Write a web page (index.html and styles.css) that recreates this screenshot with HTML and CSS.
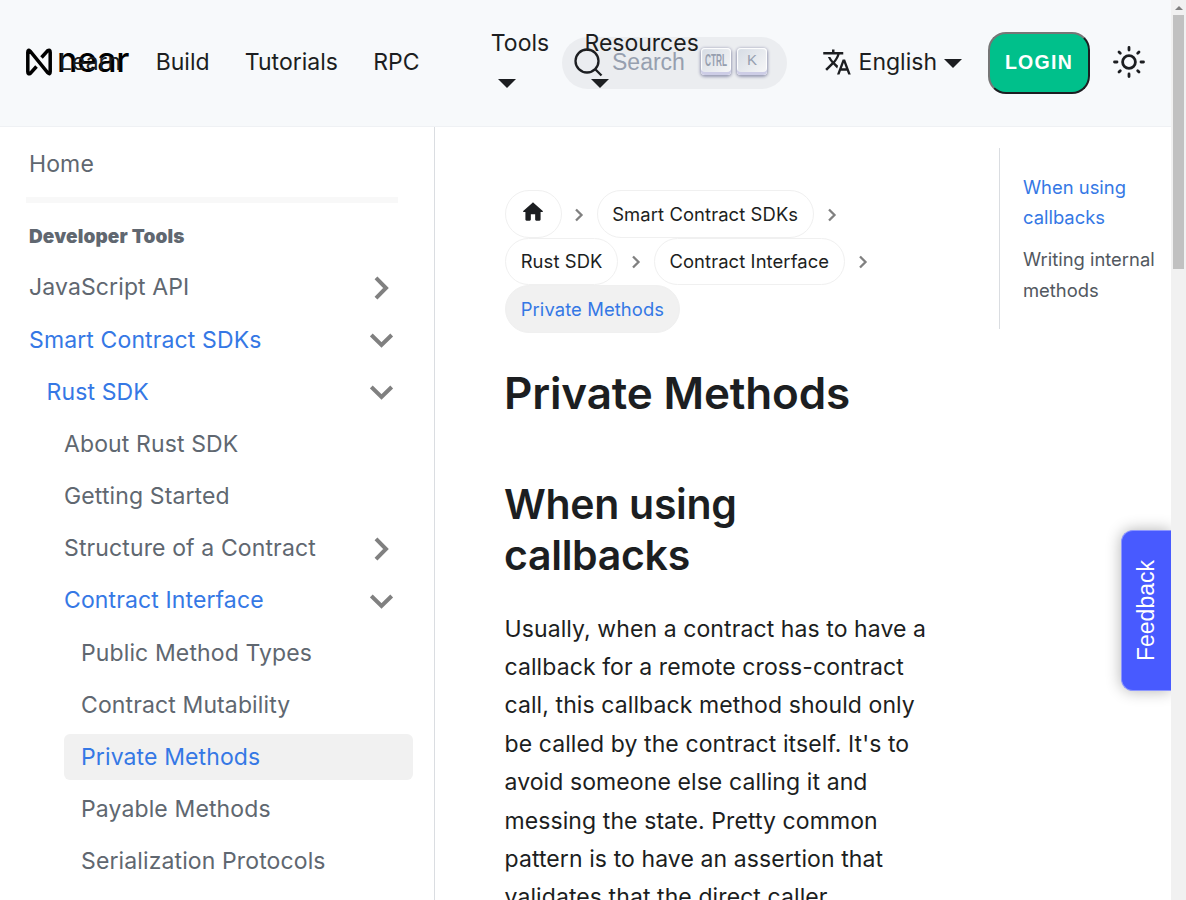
FILE: index.html
```html
<!DOCTYPE html>
<html lang="en">
<head>
<meta charset="utf-8">
<title>Private Methods</title>
<link rel="stylesheet" href="styles.css">
</head>
<body>
<div class="page">
  <header class="navbar">
    <a class="brand">
      <svg class="brand-mark" width="26" height="28" viewBox="0 0 26 28"><path d="M10.500 18.500L4.500 25.200Q1.800 27 1.800 23.800V4.200Q1.800 1 4.200 3.200L21.800 24.800Q24.200 27 24.200 23.800V4.200Q24.200 1 21.500 2.800L15.500 9.500" fill="none" stroke="#000" stroke-width="3.500"/></svg>
      <span class="brand-name">near</span>
    </a>
    <nav class="links">
      <a class="link">Learn</a>
      <a class="link">Build</a>
      <a class="link">Tutorials</a>
      <a class="link">RPC</a>
      <span class="divider"></span>
      <a class="drop">Tools<i class="caret"></i></a>
      <a class="drop">Resources<i class="caret"></i></a>
    </nav>
    <div class="search">
      <svg width="30" height="30" viewBox="0 0 30 30" fill="none" stroke="#1c1e21" stroke-width="2.300"><circle cx="13" cy="13" r="11.500"/><path d="M21 21L27.500 27.500"/></svg>
      <span class="search-label">Search</span>
      <span class="key"><svg class="key-art" width="28" height="23" viewBox="0 0 28 23"><text x="3" y="18" textLength="22" lengthAdjust="spacingAndGlyphs" class="key-ctrl">CTRL</text></svg></span>
      <span class="key key-k">K</span>
    </div>
    <div class="actions">
      <a class="lang">
        <svg width="30" height="30" viewBox="0 0 24 24" fill="#1c1e21"><path d="M12.870 15.070l-2.540-2.510.030-.030c1.740-1.940 2.980-4.170 3.710-6.530H17V4h-7V2H8v2H1v1.990h11.170C11.500 7.920 10.440 9.750 9 11.350 8.070 10.320 7.300 9.190 6.690 8h-2c.730 1.630 1.730 3.170 2.980 4.560l-5.090 5.020L4 19l5-5 3.110 3.110.760-2.040zM18.500 10h-2L12 22h2l1.120-3h4.750L21 22h2l-4.500-12zm-2.620 7l1.620-4.330L19.120 17h-3.240z"/></svg>
        <span>English</span><i class="caret"></i>
      </a>
      <button class="login">LOGIN</button>
      <svg class="sun" width="34" height="34" viewBox="-17 -17 34 34" fill="none" stroke="#1c1e21" stroke-width="2.800" stroke-linecap="round"><circle r="6.400"/><path d="M0-14.500V-12M0 12V14.500M-14.500 0H-12M12 0H14.500M-10-10L-8.700-8.700M8.700 8.700L10 10M-10 10L-8.700 8.700M8.700-8.700L10-10"/></svg>
    </div>
  </header>
  <div class="body">
    <aside class="sidebar">
      <a class="item">Home</a>
      <div class="rule"></div>
      <div class="heading">Developer Tools</div>
      <a class="item">JavaScript API<svg class="chev" viewBox="0 0 24 24"><path d="M6 1.800L16 12L6 22.200"/></svg></a>
      <a class="item on">Smart Contract SDKs<svg class="chev" viewBox="0 0 24 24"><path d="M1.300 7L11.500 17L21.700 7"/></svg></a>
      <a class="item on l2">Rust SDK<svg class="chev" viewBox="0 0 24 24"><path d="M1.300 7L11.500 17L21.700 7"/></svg></a>
      <a class="item l3">About Rust SDK</a>
      <a class="item l3">Getting Started</a>
      <a class="item l3">Structure of a Contract<svg class="chev" viewBox="0 0 24 24"><path d="M6 1.800L16 12L6 22.200"/></svg></a>
      <a class="item on l3">Contract Interface<svg class="chev" viewBox="0 0 24 24"><path d="M1.300 7L11.500 17L21.700 7"/></svg></a>
      <a class="item l4">Public Method Types</a>
      <a class="item l4">Contract Mutability</a>
      <a class="item on l4 active">Private Methods</a>
      <a class="item l4">Payable Methods</a>
      <a class="item l4">Serialization Protocols</a>
    </aside>
    <main class="doc">
      <div class="crumbs">
        <span class="pill home"><svg width="26" height="26" viewBox="0 0 24 24"><path d="M10 19v-5h4v5c0 .55.45 1 1 1h3c.55 0 1-.45 1-1v-7h1.700c.46 0 .68-.57.33-.87L12.670 3.600c-.38-.34-.96-.34-1.340 0l-8.360 7.530c-.34.3-.13.87.33.87H5v7c0 .55.45 1 1 1h3c.55 0 1-.45 1-1z" fill="#1c1e21"/></svg></span><svg class="sep" viewBox="0 0 10 14"><path d="M2 1.500L7.500 7L2 12.500"/></svg>
        <span class="pill">Smart Contract SDKs</span><svg class="sep" viewBox="0 0 10 14"><path d="M2 1.500L7.500 7L2 12.500"/></svg>
        <span class="pill">Rust SDK</span><svg class="sep" viewBox="0 0 10 14"><path d="M2 1.500L7.500 7L2 12.500"/></svg>
        <span class="pill">Contract Interface</span><svg class="sep" viewBox="0 0 10 14"><path d="M2 1.500L7.500 7L2 12.500"/></svg>
        <span class="pill current">Private Methods</span>
      </div>
      <h1>Private Methods</h1>
      <h2>When using<br>callbacks</h2>
      <p>Usually, when a contract has to have a<br>callback for a remote cross-contract<br>call, this callback method should only<br>be called by the contract itself. It's to<br>avoid someone else calling it and<br>messing the state. Pretty common<br>pattern is to have an assertion that<br>validates that the direct caller</p>
    </main>
    <aside class="toc">
      <a class="on">When using callbacks</a>
      <a>Writing internal methods</a>
    </aside>
  </div>
  <div class="feedback"><span>Feedback</span></div>
</div>
<div class="scrollbar"><i class="up"></i><div class="thumb"></div></div>
</body>
</html>
```
FILE: styles.css
```css
* { box-sizing: border-box; }
html, body { margin: 0; height: 100%; }
body {
  display: flex;
  height: 900px;
  overflow: hidden;
  background: #fff;
  color: #1c1e21;
  font: 23px/38.350px Inter, "Liberation Sans", sans-serif;
}
.page { position: relative; width: 1171px; height: 900px; overflow: hidden; }
.navbar {
  display: flex;
  height: 127px;
  padding: 0 25px 0 26px;
  background: #f7f9fb;
  border-bottom: 1px solid #eff1f4;
  white-space: nowrap;
}
.brand { position: relative; z-index: 1; display: flex; width: 33px; height: 124px; align-items: center; gap: 5px; color: #000; }
.brand-mark { flex: none; }
.brand-name { font-size: 34px; font-weight: 500; letter-spacing: -.300px; line-height: 34px; margin-top: -5px; }
.links { position: relative; z-index: 1; display: flex; width: 503px; height: 124px; align-items: center; }
.link { margin-right: 35.300px; }
.link:first-child { margin-right: 34.500px; }
.divider { width: 2px; height: 30px; background: #97999c; margin-right: 36px; }
.drop { display: flex; flex-direction: column; height: 124px; padding-top: 24px; margin-right: 35.300px; }
.caret { width: 0; height: 0; border: 9px solid transparent; border-top-color: #1c1e21; border-bottom: 0; }
.drop .caret { margin: 17px 0 0 7px; }
.search { display: flex; flex: none; align-items: center; width: 225px; height: 52px; margin-top: 37px; padding-left: 12px; border-radius: 26px; background: #ebedf0; }
.search-label { width: 97px; padding-left: 8px; margin-top: -2px; font-family: "Liberation Sans", sans-serif; color: #969faf; }
.key { display: flex; flex: none; width: 30px; height: 27px; margin: -4px 6px 0 0; padding: 0 1px; border-radius: 4px; background: linear-gradient(-225deg, #d5dbe4, #f8f8f8); box-shadow: inset 0 -3px #cdcde6, inset 0 0 1px 1px #fff, 0 1px 3px 1px rgba(30, 35, 90, .4); }
.key-art { overflow: visible; }
.key-ctrl { font: bold 16.500px/1 "Liberation Sans", sans-serif; fill: #969faf; }
.key-k { justify-content: center; font: 15px/24px "Liberation Sans", sans-serif; color: #969faf; }
.actions { display: flex; height: 124px; align-items: center; margin-left: auto; }
.lang { display: flex; align-items: center; }
.lang span { margin: 0 8px 0 7px; }
.lang .caret { margin: 2px 1px 0 -1px; }
.login { width: 102px; height: 62px; margin: 2px 22px 0 25px; padding: 0 0 1px; border: 2px solid #1c1e21; border-top-color: #767676; border-left-color: #767676; border-radius: 18px; background: #00c08b; color: #fff; font: bold 19.500px "Liberation Sans", sans-serif; letter-spacing: 1.300px; }
.body { display: flex; height: 773px; }
.sidebar { flex: none; width: 435px; padding: 14px 21px 0 12px; border-right: 1px solid #dadde1; letter-spacing: .120px; }
.item { display: flex; align-items: center; justify-content: space-between; height: 46.200px; margin-bottom: 5.970px; padding: 0 19px 0 17px; border-radius: 6px; color: #606770; }
.l2 { margin-left: 17.500px; }
.l3 { margin-left: 35px; }
.l4 { margin-left: 52px; }
.on { color: #3578e5; }
.active { background: #f1f1f1; }
.rule { width: 372px; height: 6px; margin: 10px 0 14px 14px; background: #f8f8f8; }
.heading { height: 38px; margin: 15px 0 8.300px 17px; font-size: 19px; font-weight: 900; color: #606770; letter-spacing: .130px; }
.chev { width: 24px; height: 24px; margin-top: 1px; fill: none; stroke: #808080; stroke-width: 4; }
.doc { width: 564px; padding: 63px 70px 0; white-space: nowrap; letter-spacing: .090px; }
.crumbs { display: flex; flex-wrap: wrap; align-items: center; width: 400px; font-size: 18.400px; letter-spacing: .100px; }
.pill { display: flex; align-items: center; height: 47.500px; padding: 0 14.700px; border: 1px solid #f0f0f0; border-radius: 24px; }
.home { width: 57px; padding: 0 14px; }
.home svg { margin-top: -4px; }
.sep { width: 10px; height: 14px; margin: 2px 12.500px 0 13px; fill: none; stroke: #808080; stroke-width: 2.300; }
.home + .sep { margin-left: 12px; }
.current { background: #f1f1f1; color: #3578e5; }
h1, h2, p { margin: 0; }
h1 { margin: 33px 0 0 -1px; font-size: 44px; font-weight: 600; line-height: 55px; letter-spacing: -.150px; }
h2 { margin: 58px 0 0 -1px; font-size: 41px; font-weight: 600; line-height: 51px; letter-spacing: -.300px; }
p { margin: 29.300px 0 0 -.500px; }
.toc { width: 172px; height: 181px; margin-top: 21px; padding: 24px 0 0 23px; border-left: 1px solid #dadde1; font-size: 18.400px; line-height: 30.400px; color: #525860; }
.toc a { display: block; margin-bottom: 11.300px; }
.toc .on { color: #3578e5; }
.feedback { position: absolute; right: 0; top: 530px; display: flex; width: 50px; height: 161px; align-items: center; justify-content: center; border: 1px solid #8c96ff; border-right: 0; border-radius: 12px 0 0 12px; background: #485aff; color: #fff; font: 23px "Liberation Sans", sans-serif; box-shadow: 0 0 15px rgba(0, 0, 0, .3); }
.feedback span { writing-mode: vertical-rl; transform: rotate(180deg); }
.scrollbar { display: flex; flex-direction: column; width: 15px; height: 900px; padding: 0 2px; background: #f1f1f1; }
.up { width: 0; height: 0; margin: 6px 0 5px 1.500px; border: 4px solid transparent; border-top: 0; border-bottom-color: #808080; }
.thumb { height: 254px; background: #c1c1c1; }
```
